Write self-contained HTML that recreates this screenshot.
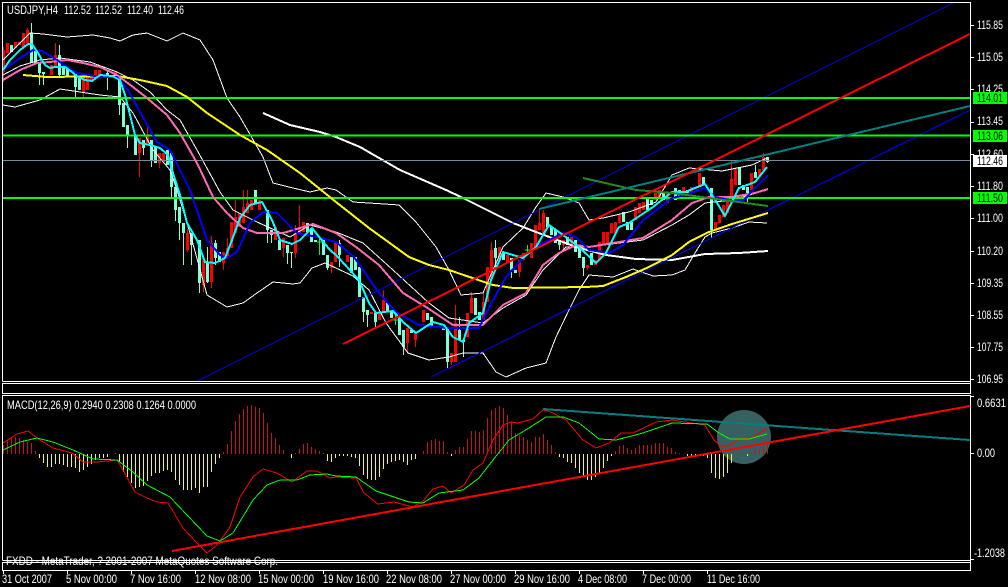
<!DOCTYPE html>
<html><head><meta charset="utf-8"><title>USDJPY,H4</title>
<style>
html,body{margin:0;padding:0;background:#000;width:1008px;height:587px;overflow:hidden}
svg{display:block}
text{font-family:"Liberation Sans",sans-serif;font-size:12px;fill:#fff}
.l{fill:none;shape-rendering:crispEdges}
</style></head><body>
<svg width="1008" height="587" viewBox="0 0 1008 587">
<rect width="1008" height="587" fill="#000"/>
<!-- circle -->
<circle cx="744" cy="437" r="27" fill="#386060"/>
<!-- candles -->
<path class="l" stroke="#ff0000" stroke-width="1" d="M3.5 47V82M27.5 28V43M55.5 43V68M83.5 75V98M139.5 138V177M147.5 124V143M159.5 153V168M187.5 229V252M203.5 260V292M211.5 236V288M223.5 252V270M227.5 238V257M235.5 200V233M243.5 190V223M247.5 190V213M283.5 238V257M295.5 225V258M299.5 205V233M331.5 262V273M383.5 290V312M407.5 328V353M415.5 333V347M451.5 353V365M455.5 305V362M471.5 292V313M483.5 292V320M491.5 242V277M519.5 260V277M539.5 210V230M543.5 210V233M563.5 240V252M587.5 265V270M731.5 160V197M763.5 153V170"/>
<path class="l" stroke="#ff0000" stroke-width="3" d="M3.5 50V72M7.5 43V53M15.5 42V48M19.5 42V45M23.5 33V47M27.5 30V43M51.5 65V75M55.5 55V68M83.5 75V92M87.5 77V90M91.5 77V80M95.5 70V77M99.5 70V75M115.5 72V76M139.5 138V153M147.5 137V143M159.5 153V163M163.5 153V162M187.5 233V250M203.5 260V285M211.5 243V282M223.5 252V263M227.5 248V257M231.5 222V248M235.5 217V233M239.5 213V227M243.5 207V223M247.5 203V213M251.5 200V210M259.5 200V210M275.5 227V240M283.5 238V248M295.5 233V253M299.5 227V233M303.5 222V232M331.5 262V268M335.5 243V262M347.5 255V262M371.5 312V314M379.5 312V320M383.5 300V312M407.5 328V343M415.5 333V340M423.5 310V322M451.5 353V362M455.5 323V362M467.5 313V337M471.5 298V313M483.5 302V320M487.5 267V302M491.5 250V277M499.5 247V260M507.5 255V262M519.5 260V272M523.5 253V260M531.5 243V258M535.5 225V248M539.5 223V230M543.5 213V233M563.5 240V245M571.5 237V245M587.5 265V268M595.5 260V265M599.5 242V260M603.5 232V245M607.5 232V245M611.5 223V233M615.5 222V233M619.5 215V223M635.5 207V220M639.5 203V213M643.5 202V210M655.5 193V200M659.5 190V198M667.5 193V203M683.5 187V192M691.5 187V192M695.5 187V188M699.5 173V187M715.5 222V230M719.5 215V223M723.5 205V217M727.5 198V213M731.5 179V197M735.5 169V185M751.5 173V190M759.5 169V175M763.5 157V170"/>
<path class="l" stroke="#7fffd4" stroke-width="1" d="M31.5 23V63M39.5 63V85M43.5 72V85M59.5 45V77M75.5 74V98M107.5 70V90M119.5 77V115M127.5 125V148M143.5 140V155M151.5 140V167M171.5 153V197M175.5 187V221M179.5 207V240M183.5 223V265M191.5 233V265M199.5 240V293M207.5 247V283M215.5 240V265M267.5 210V243M271.5 230V243M279.5 240V250M287.5 245V264M291.5 252V268M327.5 255V270M339.5 240V267M363.5 297V322M367.5 310V327M375.5 313V327M403.5 330V355M447.5 327V368M459.5 317V340M463.5 340V357M495.5 240V267M511.5 258V278M559.5 240V250M583.5 257V276M711.5 188V238M747.5 187V203M755.5 165V178M767.5 157V163"/>
<path class="l" stroke="#7fffd4" stroke-width="3" d="M11.5 45V52M31.5 33V63M35.5 50V63M39.5 63V73M43.5 72V74M59.5 55V75M63.5 67V75M67.5 68V77M75.5 74V87M79.5 78V90M107.5 73V77M119.5 77V105M123.5 103V127M127.5 125V135M135.5 135V155M143.5 140V148M151.5 140V160M155.5 147V163M167.5 150V165M171.5 153V187M175.5 187V210M179.5 207V223M183.5 223V233M191.5 233V245M199.5 240V283M207.5 263V282M215.5 243V258M219.5 252V262M255.5 190V203M267.5 210V230M271.5 230V235M279.5 240V250M287.5 245V253M291.5 252V253M307.5 223V232M311.5 228V242M315.5 240V242M323.5 240V255M327.5 255V268M339.5 243V255M351.5 257V273M355.5 257V270M359.5 267V297M363.5 297V312M367.5 310V315M375.5 313V322M387.5 303V312M391.5 312V318M399.5 318V335M403.5 330V347M411.5 330V333M427.5 313V320M431.5 317V327M443.5 327V330M447.5 327V362M459.5 330V340M463.5 340V342M475.5 298V315M479.5 312V320M495.5 248V258M503.5 253V260M511.5 258V270M515.5 270V273M547.5 217V227M551.5 227V235M555.5 230V243M559.5 240V245M567.5 237V245M575.5 240V252M579.5 247V258M583.5 257V268M591.5 253V265M623.5 212V222M627.5 222V230M631.5 222V230M647.5 197V210M651.5 200V205M663.5 193V200M675.5 188V200M679.5 190V198M687.5 190V193M703.5 177V185M711.5 188V230M739.5 168V185M743.5 185V190M747.5 187V193M755.5 172V178M767.5 157V162"/>
<path class="l" stroke="#00ff00" stroke-width="1" d="M319.5 237V255M317 242H322M395.5 315V325M393 320H398M527.5 245V255M525 250H530"/>
<!-- Bollinger -->
<polyline class="l" stroke="#fff" stroke-width="1" points="3,60 15,48 30,33 43,34 67,37 93,35 110,38 120,41 133,35 147,33 167,41 183,33 200,40 213,60 227,98 240,117 263,157 273,183 293,188 310,192 327,188 336,190 353,202 369,203 399,205 416,222 436,247 449,270 461,295 483,293 503,247 523,228 536,207 546,193 563,197 579,203 589,220 603,218 629,212 656,202 672,175 689,168 722,171 752,165 767,158"/>
<polyline class="l" stroke="#fff" stroke-width="1" points="3,75 20,66 40,60 60,58 90,62 117,72 133,80 150,92 167,110 180,120 197,150 220,192 233,210 257,222 290,237 310,225 336,232 363,243 393,270 429,303 449,318 483,323 503,308 526,295 543,270 566,247 589,247 619,243 643,240 672,225 689,215 705,203 732,200 767,190"/>
<polyline class="l" stroke="#fff" stroke-width="1" points="3,105 15,107 40,100 60,89 80,92 100,95 120,97 133,113 153,150 170,170 177,190 190,233 207,295 227,307 243,303 257,293 273,282 293,284 300,283 312,268 325,263 336,268 353,276 369,290 386,323 408,353 429,360 449,357 463,353 483,353 496,372 506,377 526,368 546,363 556,337 569,310 579,290 589,275 613,277 633,269 653,276 672,275 685,270 695,253 705,237 712,233 732,228 749,222 767,223"/>
<!-- thick white MA -->
<polyline class="l" stroke="#fff" stroke-width="2" points="263,113 290,125 320,132 336,137 360,147 400,170 446,190 463,198 513,223 536,232 576,247 606,255 636,259 672,260 705,254 739,253 768,251"/>
<!-- blue channel -->
<path class="l" stroke="#0000ff" stroke-width="1" d="M197 381L955 2M431 377L970 110"/>
<!-- horizontal lines -->
<path class="l" stroke="#778899" stroke-width="1" d="M3 160.5H970"/>
<path class="l" stroke="#00ff00" stroke-width="2" d="M3 98H970M3 135.5H970M3 198H970"/>
<!-- yellow -->
<polyline class="l" stroke="#ffff00" stroke-width="2" points="23,75 47,77 117,76 140,80 167,86 187,97 207,113 240,135 267,150 300,173 336,202 369,228 409,257 429,265 449,270 493,285 513,288 586,287 603,286 626,277 649,267 672,255 689,242 709,232 732,224 768,213"/>
<!-- pink -->
<polyline class="l" stroke="#ff69b4" stroke-width="2" points="3,80 20,70 37,63 50,62 67,60 83,63 100,67 117,75 133,87 147,98 167,115 180,133 197,163 213,197 227,213 243,228 257,233 283,233 300,228 313,224 336,233 356,247 379,265 403,293 426,307 453,325 483,325 503,305 526,293 543,265 559,253 576,245 589,247 619,242 643,238 672,220 692,203 709,197 732,197 755,193 768,189"/>
<!-- blue MA -->
<polyline class="l" stroke="#0000ff" stroke-width="2" points="3,70 20,58 33,50 42,51 57,60 67,67 77,73 100,77 117,77 128,90 140,112 157,142 170,150 180,170 190,190 207,240 220,255 227,258 237,252 250,223 263,212 277,213 297,233 317,237 336,242 354,257 379,293 396,312 419,325 446,328 479,328 493,300 506,277 523,258 539,245 563,233 576,237 589,250 609,253 623,245 643,220 672,198 685,195 705,188 715,197 730,200 744,200 755,188 768,175"/>
<!-- cyan MA -->
<polyline class="l" stroke="#00ffff" stroke-width="2" points="3,70 10,60 20,50 28,44 32,44 38,53 45,65 50,68 55,67 65,67 72,72 78,77 85,80 92,81 100,75 112,76 120,80 125,95 130,115 135,135 140,143 150,145 160,148 168,155 172,170 180,195 187,223 197,240 205,262 215,263 225,258 232,240 240,218 250,205 262,202 272,220 280,240 292,244 300,240 312,228 320,238 330,250 336,255 359,280 369,303 376,313 393,311 403,322 416,333 433,322 444,325 453,337 463,342 469,323 483,313 491,280 503,252 513,255 523,258 536,247 549,225 563,235 579,247 596,263 606,253 619,227 629,223 653,207 672,192 685,192 705,184 714,198 725,216 739,188 755,182 767,167"/>
<!-- trendlines main -->
<path class="l" stroke="#228b22" stroke-width="2" d="M583 178L636 190L672 193L768 206"/>
<path class="l" stroke="#008080" stroke-width="2" d="M539 209L970 106"/>
<path class="l" stroke="#ff0000" stroke-width="2" d="M343 344L970 34"/>
<!-- MACD histogram -->
<path class="l" stroke="#ffff00" stroke-width="1" d="M39.5 454V458M43.5 454V463M47.5 454V467M51.5 454V467M55.5 454V464M59.5 454V464M63.5 454V465M67.5 454V467M71.5 454V467M75.5 454V468M79.5 454V472M83.5 454V470M87.5 454V467M91.5 454V464M95.5 454V460M99.5 454V458M103.5 454V458M107.5 454V457M119.5 454V462M123.5 454V472M127.5 454V477M131.5 454V483M135.5 454V488M139.5 454V487M143.5 454V486M147.5 454V481M151.5 454V476M155.5 454V473M159.5 454V473M163.5 454V471M167.5 454V470M171.5 454V472M175.5 454V480M179.5 454V485M183.5 454V490M187.5 454V490M191.5 454V490M195.5 454V488M199.5 454V493M203.5 454V487M207.5 454V487M211.5 454V472M215.5 454V464M219.5 454V458M291.5 454V458M327.5 454V461M331.5 454V462M335.5 454V458M339.5 454V456M343.5 454V456M347.5 454V456M351.5 454V457M355.5 454V458M359.5 454V466M363.5 454V475M367.5 454V479M371.5 454V480M375.5 454V480M379.5 454V477M383.5 454V469M387.5 454V464M391.5 454V462M395.5 454V461M399.5 454V460M403.5 454V462M407.5 454V465M411.5 454V460M415.5 454V459M451.5 454V456M559.5 454V457M563.5 454V458M567.5 454V462M571.5 454V463M575.5 454V468M579.5 454V473M583.5 454V477M587.5 454V480M591.5 454V480M595.5 454V477M599.5 454V473M603.5 454V468M607.5 454V461M611.5 454V456M687.5 454V456M691.5 454V456M695.5 454V456M699.5 454V456M703.5 454V456M707.5 454V458M711.5 454V473M715.5 454V478M719.5 454V479M723.5 454V477M727.5 454V473M731.5 454V463M747.5 454V456"/>
<path class="l" stroke="#cc1111" stroke-width="1" d="M3.5 445V454M7.5 440V454M11.5 438V454M15.5 437V454M19.5 438V454M23.5 440V454M27.5 442V454M31.5 443V454M35.5 451V454M115.5 453V454M223.5 452V454M227.5 444V454M231.5 431V454M235.5 421V454M239.5 414V454M243.5 409V454M247.5 406V454M251.5 405V454M255.5 407V454M259.5 408V454M263.5 413V454M267.5 423V454M271.5 433V454M275.5 438V454M279.5 445V454M283.5 450V454M295.5 453V454M299.5 449V454M303.5 444V454M307.5 443V454M311.5 447V454M315.5 449V454M319.5 451V454M323.5 453V454M423.5 451V454M427.5 442V454M431.5 440V454M435.5 439V454M439.5 441V454M443.5 441V454M447.5 452V454M455.5 450V454M459.5 447V454M463.5 447V454M467.5 439V454M471.5 431V454M475.5 431V454M479.5 432V454M483.5 430V454M487.5 418V454M491.5 410V454M495.5 408V454M499.5 406V454M503.5 408V454M507.5 415V454M511.5 422V454M515.5 433V454M519.5 435V454M523.5 437V454M527.5 440V454M531.5 442V454M535.5 437V454M539.5 437V454M543.5 434V454M547.5 440V454M551.5 445V454M555.5 452V454M615.5 451V454M619.5 446V454M623.5 445V454M627.5 448V454M631.5 450V454M635.5 448V454M639.5 445V454M643.5 445V454M647.5 445V454M651.5 445V454M655.5 443V454M659.5 443V454M663.5 443V454M667.5 447V454M671.5 448V454M675.5 452V454M679.5 453V454M739.5 453V454M751.5 452V454M755.5 450V454M759.5 449V454M763.5 447V454M767.5 443V454"/>
<!-- MACD lines -->
<polyline class="l" stroke="#ff0000" stroke-width="1" points="3,443 17,434 28,431 37,438 53,448 72,453 83,462 97,462 117,460 123,470 135,492 147,498 157,502 168,503 183,528 197,543 207,553 217,545 230,527 240,497 253,477 263,469 277,473 292,482 307,471 317,471 330,478 336,477 356,478 364,493 378,504 394,502 413,507 423,501 433,489 443,486 451,493 464,485 473,470 483,463 493,440 503,425 511,422 518,423 533,419 543,410 551,412 566,420 583,440 596,448 609,443 621,433 633,433 656,422 672,420 705,425 714,440 722,447 730,445 739,439 752,438 767,428"/>
<polyline class="l" stroke="#00ff00" stroke-width="1" points="3,450 20,442 37,438 53,442 73,450 93,459 117,460 133,472 147,485 170,497 187,515 207,536 220,541 233,533 253,500 267,485 280,480 297,480 310,475 327,474 336,476 356,477 376,491 409,502 423,503 439,493 463,490 479,478 493,460 509,440 529,428 546,417 563,417 579,423 599,439 616,440 643,433 672,423 707,424 719,433 730,439 749,439 767,434"/>
<path class="l" stroke="#008080" stroke-width="2" d="M543 409L970 440"/>
<path class="l" stroke="#ff0000" stroke-width="2" d="M172 551L970 406"/>
<!-- frames -->
<g class="l" stroke="#fff" stroke-width="1">
<path d="M2.5 381.5V2.5H970.5V393.5H2.5V383.5H970.5"/>
<path d="M2.5 381.5H970.5"/>
<path d="M2.5 560.5V395.5H970.5V570.5H2.5V562.5H970.5"/>
<path d="M2.5 560.5H970.5"/>
<path d="M971 25.5h3M971 57.5h3M971 89.5h3M971 122.5h3M971 154.5h3M971 186.5h3M971 218.5h3M971 251.5h3M971 283.5h3M971 315.5h3M971 347.5h3M971 379.5h3M971 396.5h3M971 453.5h3M971 559.5h3"/>
<path d="M3.5 570V574M67.5 570V574M131.5 570V574M195.5 570V574M259.5 570V574M323.5 570V574M387.5 570V574M451.5 570V574M515.5 570V574M579.5 570V574M643.5 570V574M707.5 570V574"/>
</g>
<!-- title -->
<text x="7" y="14" textLength="51" lengthAdjust="spacingAndGlyphs">USDJPY,H4</text>
<text x="64" y="14" textLength="27" lengthAdjust="spacingAndGlyphs">112.52</text>
<text x="95" y="14" textLength="27" lengthAdjust="spacingAndGlyphs">112.52</text>
<text x="127" y="14" textLength="26" lengthAdjust="spacingAndGlyphs">112.40</text>
<text x="158" y="14" textLength="26" lengthAdjust="spacingAndGlyphs">112.46</text>
<text x="7" y="409" textLength="189" lengthAdjust="spacingAndGlyphs">MACD(12,26,9) 0.2940 0.2308 0.1264 0.0000</text>
<text x="6" y="565" textLength="272" lengthAdjust="spacingAndGlyphs">FXDD - MetaTrader, ? 2001-2007 MetaQuotes Software Corp.</text>
<path class="l" stroke="#fff" d="M2.5 560.5H970.5"/>
<!-- price axis -->
<g>
<text x="977" y="29" textLength="26" lengthAdjust="spacingAndGlyphs">115.85</text>
<text x="977" y="61" textLength="26" lengthAdjust="spacingAndGlyphs">115.05</text>
<text x="977" y="93" textLength="26" lengthAdjust="spacingAndGlyphs">114.25</text>
<text x="977" y="125" textLength="26" lengthAdjust="spacingAndGlyphs">113.45</text>
<text x="977" y="158" textLength="26" lengthAdjust="spacingAndGlyphs">112.60</text>
<text x="977" y="190" textLength="26" lengthAdjust="spacingAndGlyphs">111.80</text>
<text x="977" y="222" textLength="26" lengthAdjust="spacingAndGlyphs">111.00</text>
<text x="977" y="255" textLength="26" lengthAdjust="spacingAndGlyphs">110.20</text>
<text x="977" y="287" textLength="26" lengthAdjust="spacingAndGlyphs">109.35</text>
<text x="977" y="319" textLength="26" lengthAdjust="spacingAndGlyphs">108.55</text>
<text x="977" y="351" textLength="26" lengthAdjust="spacingAndGlyphs">107.75</text>
<text x="977" y="383" textLength="26" lengthAdjust="spacingAndGlyphs">106.95</text>
<text x="977" y="407" textLength="29" lengthAdjust="spacingAndGlyphs">0.6631</text>
<text x="977" y="457" textLength="18" lengthAdjust="spacingAndGlyphs">0.00</text>
<text x="974" y="557" textLength="31" lengthAdjust="spacingAndGlyphs">-1.2038</text>
</g>
<!-- price tags -->
<rect x="973" y="92" width="34" height="12" fill="#00ff00"/>
<rect x="973" y="130" width="34" height="12" fill="#00ff00"/>
<rect x="973" y="155" width="34" height="12" fill="#fff"/>
<rect x="973" y="192" width="34" height="12" fill="#00ff00"/>
<text x="977" y="102" textLength="26" lengthAdjust="spacingAndGlyphs" style="fill:#000">114.01</text>
<text x="977" y="140" textLength="26" lengthAdjust="spacingAndGlyphs" style="fill:#000">113.06</text>
<text x="977" y="165" textLength="26" lengthAdjust="spacingAndGlyphs" style="fill:#000">112.46</text>
<text x="977" y="202" textLength="26" lengthAdjust="spacingAndGlyphs" style="fill:#000">111.50</text>
<!-- time axis -->
<text x="2" y="583" textLength="50" lengthAdjust="spacingAndGlyphs">31 Oct 2007</text>
<text x="66" y="583" textLength="51" lengthAdjust="spacingAndGlyphs">5 Nov 00:00</text>
<text x="130" y="583" textLength="51" lengthAdjust="spacingAndGlyphs">7 Nov 16:00</text>
<text x="195" y="583" textLength="56" lengthAdjust="spacingAndGlyphs">12 Nov 08:00</text>
<text x="258" y="583" textLength="56" lengthAdjust="spacingAndGlyphs">15 Nov 00:00</text>
<text x="323" y="583" textLength="56" lengthAdjust="spacingAndGlyphs">19 Nov 16:00</text>
<text x="386" y="583" textLength="56" lengthAdjust="spacingAndGlyphs">22 Nov 08:00</text>
<text x="450" y="583" textLength="56" lengthAdjust="spacingAndGlyphs">27 Nov 00:00</text>
<text x="514" y="583" textLength="56" lengthAdjust="spacingAndGlyphs">29 Nov 16:00</text>
<text x="578" y="583" textLength="49" lengthAdjust="spacingAndGlyphs">4 Dec 08:00</text>
<text x="642" y="583" textLength="49" lengthAdjust="spacingAndGlyphs">7 Dec 00:00</text>
<text x="707" y="583" textLength="53" lengthAdjust="spacingAndGlyphs">11 Dec 16:00</text>
</svg>
</body></html>
